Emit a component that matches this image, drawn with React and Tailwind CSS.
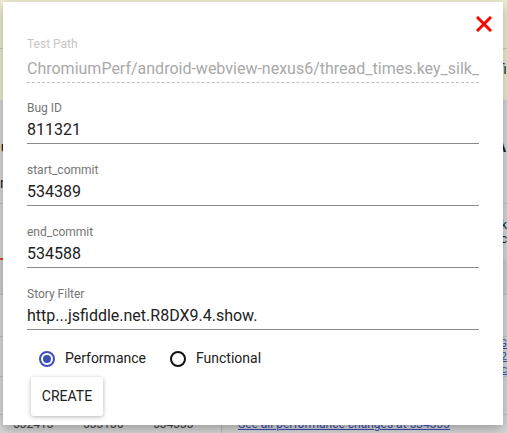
import React from "react";

function Field({ label, value, first }) {
  return (
    <div className={first ? "mt-[18px]" : "mt-[19px]"}>
      <div className="text-[12px] leading-[14px] text-[#757575]">{label}</div>
      <div className="mt-[4px] h-[25px] border-b border-[#8c8c8c] text-[16px] leading-[22px] text-[#212121] whitespace-nowrap overflow-hidden">
        {value}
      </div>
    </div>
  );
}

export default function App() {
  return (
    <div
      className="relative h-[433px] w-full overflow-hidden bg-[#dadada]"
      style={{ fontFamily: "Roboto, 'Liberation Sans', sans-serif" }}
    >
      {/* background page */}
      <div className="flex flex-col">
        <div className="h-[49px] bg-[#f0efd3] border-b border-[#cfcfc0]" />
        <div className="h-[51px] bg-[#f0efd3] flex items-start pt-[10px] pl-[499px] text-[14px] text-[#222]">fi</div>
        <div className="h-[64px] flex items-end pb-[6px] justify-between px-[1px] text-[15px] font-bold text-[#222]">
          <span>u</span>
          <span>A</span>
        </div>
        <div className="h-[40px] border-b border-[#c4c4c4] flex items-center text-[14px] text-[#222]">n</div>
        <div className="h-[54px] flex flex-col items-end pt-[14px] text-[12px] leading-[14px] text-[#222]">
          <span>k</span>
          <span>c</span>
        </div>
        <div className="h-[2px] w-[8px] bg-[#e24a3a]" />
        <div className="h-[35px] border-b border-[#c4c4c4] bg-[#d2d2d2]" />
        <div className="h-[42px] border-b border-[#c4c4c4]" />
        <div className="h-[40px] border-b border-[#c4c4c4] flex flex-col items-end text-[11px] leading-[13px] text-[#3b4fb8] underline">
          <span>G</span>
          <span>2</span>
          <span>c</span>
        </div>
        <div className="h-[38px] border-b border-[#c4c4c4]" />
        <div className="flex items-start h-[20px] text-[12px] text-[#444]">
          <span className="ml-[13px] w-[70px]">532413</span>
          <span className="w-[70px]">533136</span>
          <span className="w-[69px] border-r border-[#bbb]">534333</span>
          <span className="ml-[16px] text-[#3b4fb8] underline">See all performance changes at 534333</span>
        </div>
      </div>

      {/* dialog */}
      <div className="absolute left-[3px] top-[2px] w-[500px] h-[423px] bg-white shadow-[0_4px_12px_rgba(0,0,0,0.3)] flex flex-col px-6 pt-[14px]">
        <div className="flex justify-end -mr-[13px]">
          <svg width="16" height="16" viewBox="0 0 16 16">
            <path d="M2 2 L14 14 M14 2 L2 14" stroke="#ff0000" strokeWidth="3" strokeLinecap="square" />
          </svg>
        </div>
        <div className="mt-[5px]">
          <div className="text-[12px] leading-[14px] text-[#c6c6c6]">Test Path</div>
          <div className="mt-[8px] h-[24px] border-b border-dashed border-[#c2c2c2] text-[16px] leading-[20px] text-[#a9a9a9] whitespace-nowrap overflow-hidden">
            ChromiumPerf/android-webview-nexus6/thread_times.key_silk_
          </div>
        </div>
        <Field first label="Bug ID" value="811321" />
        <Field label="start_commit" value="534389" />
        <Field label="end_commit" value="534588" />
        <Field label="Story Filter" value="http...jsfiddle.net.R8DX9.4.show." />

        <div className="mt-[18px] flex items-center pl-[12px] text-[14px] text-[#212121]">
          <span className="w-[16px] h-[16px] rounded-full border-2 border-[#3f51b5] flex items-center justify-center">
            <span className="w-[8px] h-[8px] rounded-full bg-[#3f51b5]" />
          </span>
          <span className="ml-[10px]">Performance</span>
          <span className="ml-[24px] w-[16px] h-[16px] rounded-full border-2 border-[#111]" />
          <span className="ml-[10px]">Functional</span>
        </div>

        <div className="mt-[8px] pl-[4px]">
          <button className="h-[39px] w-[72px] rounded-[3px] bg-white text-[14px] text-[#212121] uppercase shadow-[0_1px_4px_rgba(0,0,0,0.3)]">
            Create
          </button>
        </div>
      </div>
    </div>
  );
}
